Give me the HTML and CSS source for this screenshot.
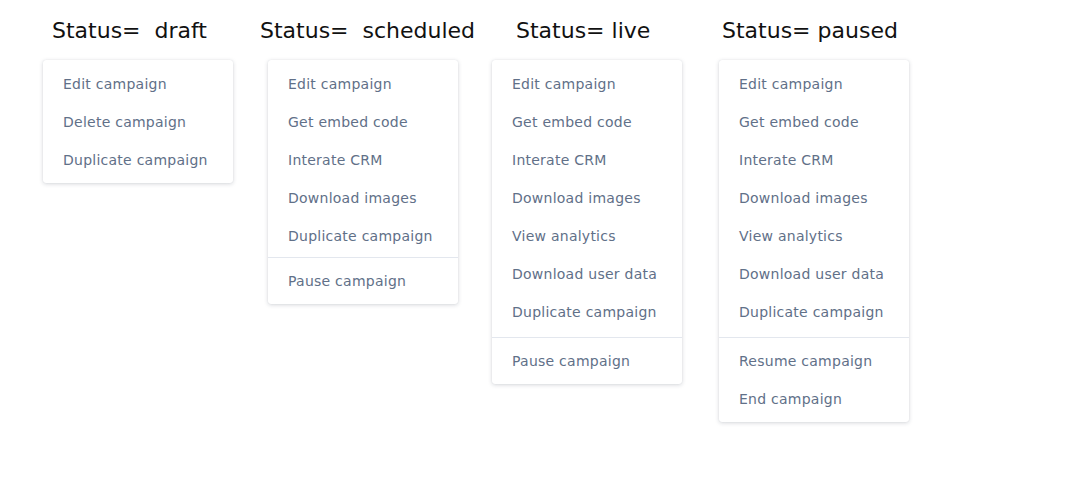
FILE: index.html
```html
<!DOCTYPE html>
<html>
<head>
<meta charset="utf-8">
<link rel="stylesheet" href="styles.css">
</head>
<body>
<div class="board">
  <section class="col col-draft">
    <h2 class="title">Status=&nbsp; draft</h2>
    <div class="menu">
      <div class="group">
        <div class="item">Edit campaign</div>
        <div class="item">Delete campaign</div>
        <div class="item">Duplicate campaign</div>
      </div>
    </div>
  </section>
  <section class="col col-scheduled">
    <h2 class="title">Status=&nbsp; scheduled</h2>
    <div class="menu">
      <div class="group">
        <div class="item">Edit campaign</div>
        <div class="item">Get embed code</div>
        <div class="item">Interate CRM</div>
        <div class="item">Download images</div>
        <div class="item">Duplicate campaign</div>
      </div>
      <div class="group">
        <div class="item">Pause campaign</div>
      </div>
    </div>
  </section>
  <section class="col col-live">
    <h2 class="title">Status= live</h2>
    <div class="menu">
      <div class="group">
        <div class="item">Edit campaign</div>
        <div class="item">Get embed code</div>
        <div class="item">Interate CRM</div>
        <div class="item">Download images</div>
        <div class="item">View analytics</div>
        <div class="item">Download user data</div>
        <div class="item">Duplicate campaign</div>
      </div>
      <div class="group">
        <div class="item">Pause campaign</div>
      </div>
    </div>
  </section>
  <section class="col col-paused">
    <h2 class="title">Status= paused</h2>
    <div class="menu">
      <div class="group">
        <div class="item">Edit campaign</div>
        <div class="item">Get embed code</div>
        <div class="item">Interate CRM</div>
        <div class="item">Download images</div>
        <div class="item">View analytics</div>
        <div class="item">Download user data</div>
        <div class="item">Duplicate campaign</div>
      </div>
      <div class="group">
        <div class="item">Resume campaign</div>
        <div class="item">End campaign</div>
      </div>
    </div>
  </section>
</div>
</body>
</html>
```
FILE: styles.css
```css
html, body {
  margin: 0;
  padding: 0;
  background: #ffffff;
}
body {
  min-height: 100vh;
  font-family: "DejaVu Sans", "Open Sans", sans-serif;
}
.board {
  display: flex;
  align-items: flex-start;
  padding: 17px 0 0 43px;
}
.col {
  display: flex;
  flex-direction: column;
  width: 190px;
}
.col-draft { margin-right: 35px; }
.col-scheduled { margin-right: 34px; }
.col-live { margin-right: 37px; }
.title {
  margin: 0 0 15px 0;
  height: 28px;
  font-weight: 400;
  font-size: 22px;
  line-height: 28px;
  color: #111111;
  white-space: nowrap;
}
.col-draft .title { margin-left: 9px; }
.col-scheduled .title { margin-left: -8px; }
.col-live .title { margin-left: 24px; }
.col-paused .title { margin-left: 3px; }
.menu {
  background: #ffffff;
  border-radius: 3px;
  box-shadow: 0 1px 4px rgba(30, 40, 60, 0.18), 0 0 1px rgba(30, 40, 60, 0.12);
}
.group {
  padding: 5px 0 4px;
}
.group:not(:last-child) {
  padding-bottom: 6px;
}
.group + .group {
  padding-top: 4px;
  border-top: 1px solid #e3e7ee;
}
.col-scheduled .group:not(:last-child) {
  padding-bottom: 2px;
}
.item {
  height: 38px;
  line-height: 38px;
  padding-left: 20px;
  font-size: 14px;
  letter-spacing: 0.25px;
  color: #617088;
  white-space: nowrap;
}
```
